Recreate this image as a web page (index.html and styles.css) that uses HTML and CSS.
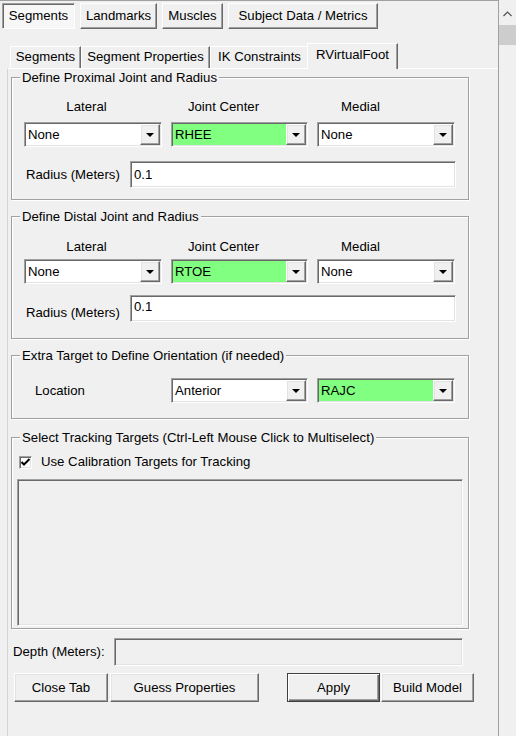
FILE: index.html
```html
<!DOCTYPE html>
<html>
<head>
<meta charset="utf-8">
<link rel="stylesheet" href="styles.css">
</head>
<body>
<div class="app">
  <div class="main">
    <div class="top-tabs">
      <div class="ttab active w-seg">Segments</div>
      <div class="ttab w-land">Landmarks</div>
      <div class="ttab w-mus">Muscles</div>
      <div class="ttab w-subj">Subject Data / Metrics</div>
    </div>
    <div class="inner-tabs">
      <div class="itab w-iseg">Segments</div>
      <div class="itab w-iprop">Segment Properties</div>
      <div class="itab w-iik">IK Constraints</div>
      <div class="itab active w-ifoot">RVirtualFoot</div>
    </div>
    <div class="panel">
      <div class="group g1">
        <span class="group-title">Define Proximal Joint and Radius</span>
        <div class="col-labels"><span>Lateral</span><span>Joint Center</span><span>Medial</span></div>
        <div class="combo-row">
          <div class="combo"><span class="combo-text">None</span><span class="drop"><i class="tri"></i></span></div>
          <div class="combo green"><span class="combo-text">RHEE</span><span class="drop"><i class="tri"></i></span></div>
          <div class="combo"><span class="combo-text">None</span><span class="drop"><i class="tri"></i></span></div>
        </div>
        <div class="radius-row">
          <span class="radius-label">Radius (Meters)</span>
          <div class="field">0.1</div>
        </div>
      </div>

      <div class="group g2">
        <span class="group-title">Define Distal Joint and Radius</span>
        <div class="col-labels"><span>Lateral</span><span>Joint Center</span><span>Medial</span></div>
        <div class="combo-row">
          <div class="combo"><span class="combo-text">None</span><span class="drop"><i class="tri"></i></span></div>
          <div class="combo green"><span class="combo-text">RTOE</span><span class="drop"><i class="tri"></i></span></div>
          <div class="combo"><span class="combo-text">None</span><span class="drop"><i class="tri"></i></span></div>
        </div>
        <div class="radius-row">
          <span class="radius-label">Radius (Meters)</span>
          <div class="field">0.1</div>
        </div>
      </div>

      <div class="group g3">
        <span class="group-title">Extra Target to Define Orientation (if needed)</span>
        <div class="combo-row">
          <span class="loc-label">Location</span>
          <div class="combo"><span class="combo-text">Anterior</span><span class="drop"><i class="tri"></i></span></div>
          <div class="combo green"><span class="combo-text">RAJC</span><span class="drop"><i class="tri"></i></span></div>
        </div>
      </div>

      <div class="group g4">
        <span class="group-title">Select Tracking Targets (Ctrl-Left Mouse Click to Multiselect)</span>
        <div class="check-row">
          <span class="checkbox"><svg width="11" height="11" viewBox="0 0 11 11"><polyline points="1.5,5 4,7.5 9.5,2" fill="none" stroke="#000" stroke-width="2"/></svg></span>
          <span class="check-label">Use Calibration Targets for Tracking</span>
        </div>
        <div class="listbox"></div>
      </div>

      <div class="depth-row">
        <span class="depth-label">Depth (Meters):</span>
        <div class="field disabled"></div>
      </div>

      <div class="button-row">
        <div class="btn w-close">Close Tab</div>
        <div class="btn w-guess">Guess Properties</div>
        <div class="btn default w-apply">Apply</div>
        <div class="btn w-build">Build Model</div>
      </div>
    </div>
  </div>
  <div class="vscroll">
    <div class="sb-up"><svg width="9" height="6" viewBox="0 0 9 6"><polyline points="0.5,5 4.5,1 8.5,5" fill="none" stroke="#505050" stroke-width="1.2"/></svg></div>
    <div class="sb-thumb"></div>
  </div>
</div>
</body>
</html>
```
FILE: styles.css
```css
* { box-sizing: border-box; }
html, body { margin: 0; padding: 0; }
body {
  width: 516px;
  height: 736px;
  overflow: hidden;
  background: #f0f0f0;
  font-family: "Liberation Sans", Arial, sans-serif;
  font-size: 13.2px;
  line-height: 16px;
  color: #000;
}
.app { display: flex; height: 736px; }
.main {
  width: 498px;
  border-top: 1px solid #a0a0a0;
  overflow: hidden;
  display: flex;
  flex-direction: column;
}

/* outer button-style tabs */
.top-tabs { display: flex; gap: 5px; padding: 2px 0 0 2px; }
.ttab {
  height: 26px;
  display: flex;
  align-items: center;
  justify-content: center;
  border: 1px solid;
  border-color: #fff #696969 #696969 #fff;
  box-shadow: inset -1px -1px 0 #a0a0a0;
}
.ttab.active {
  border-color: #a0a0a0 #fff #fff #a0a0a0;
  box-shadow: inset 1px 1px 0 #696969;
  background: #f7f7f7;
}
.w-seg { width: 73px; }
.w-land { width: 77px; }
.w-mus { width: 61px; }
.w-subj { width: 150px; }

/* inner tabs */
.inner-tabs {
  display: flex;
  align-items: flex-end;
  height: 25px;
  margin-top: 14px;
  padding-left: 10px;
  position: relative;
  z-index: 1;
}
.itab {
  height: 22px;
  padding-bottom: 1px;
  display: flex;
  align-items: center;
  justify-content: center;
  border: 1px solid;
  border-bottom: 0;
  border-color: #fff #696969 transparent #fff;
  box-shadow: inset -1px 0 0 #a0a0a0;
}
.itab.active {
  height: 26px;
  margin: 0 -2px -1px;
  padding-bottom: 4px;
  background: #f0f0f0;
}
.w-iseg { width: 71px; }
.w-iprop { width: 129px; }
.w-iik { width: 99px; }
.w-ifoot { width: 91px; }

.panel {
  flex: 1;
  margin-left: 7px;
  border-top: 1px solid #fff;
  border-left: 1px solid #d5d5d5;
  padding: 8px 0 0 3px;
}

/* group boxes */
.group {
  width: 458px;
  border: 1px solid #a0a0a0;
  box-shadow: inset 1px 1px 0 #fff, 1px 1px 0 #fff;
  position: relative;
}
.group-title {
  position: absolute;
  top: -8px;
  left: 8px;
  padding: 0 2px;
  background: #f0f0f0;
  white-space: nowrap;
}
.g1 { padding: 21px 0 11px 12px; }
.g2 { padding: 22px 0 16px 12px; margin-top: 16px; }
.g3 { padding: 22px 0 15px 12px; margin-top: 16px; }
.g4 { padding: 16px 0 2px 0; margin-top: 18px; }

.col-labels {
  display: grid;
  grid-template-columns: 125px 149px 125px;
  text-align: center;
  height: 16px;
}
.combo-row {
  display: grid;
  grid-template-columns: 138px 137px 138px;
  column-gap: 9px;
}
.g1 .combo-row { margin-top: 7px; }
.g2 .combo-row { margin-top: 4px; }
.loc-label { padding-left: 11px; align-self: center; }

.combo {
  height: 25px;
  border: 1px solid;
  border-color: #a0a0a0 #fff #fff #a0a0a0;
  box-shadow: inset 1px 1px 0 #696969, inset -1px -1px 0 #e3e3e3;
  padding: 1px;
  background: #fff;
  display: flex;
}
.combo.green { background: #80ff80; }
.combo-text {
  flex: 1;
  padding-left: 2px;
  display: flex;
  align-items: center;
}
.drop {
  width: 20px;
  border: 1px solid;
  border-color: #fff #696969 #696969 #fff;
  box-shadow: inset -1px -1px 0 #a0a0a0, inset 1px 1px 0 #e3e3e3;
  background: #f0f0f0;
  display: flex;
  align-items: center;
  justify-content: center;
}
.tri {
  width: 0;
  height: 0;
  border-left: 4px solid transparent;
  border-right: 4px solid transparent;
  border-top: 4px solid #000;
  margin-top: 1px;
}

.radius-row {
  display: grid;
  grid-template-columns: 106px 326px;
}
.g1 .radius-row { margin-top: 14px; align-items: center; }
.g2 .radius-row { margin-top: 11px; align-items: start; }
.radius-label { padding-left: 2px; }
.g2 .radius-label { padding-top: 10px; }

.field {
  height: 27px;
  border: 1px solid;
  border-color: #a0a0a0 #fff #fff #a0a0a0;
  box-shadow: inset 1px 1px 0 #696969, inset -1px -1px 0 #e3e3e3;
  background: #fff;
  padding: 0 3px;
  display: flex;
  align-items: center;
}
.g2 .field { align-items: flex-start; padding-top: 3px; }
.field.disabled { background: #f0f0f0; height: 28px; }

.check-row {
  display: flex;
  align-items: center;
  height: 16px;
  margin-left: 7px;
}
.checkbox {
  width: 13px;
  height: 13px;
  border: 1px solid;
  border-color: #a0a0a0 #fff #fff #a0a0a0;
  box-shadow: inset 1px 1px 0 #696969, inset -1px -1px 0 #e3e3e3;
  background: #fff;
  display: flex;
  align-items: center;
  justify-content: center;
}
.checkbox svg { display: block; }
.check-label { margin-left: 9px; }

.listbox {
  margin: 9px 0 0 5px;
  width: 446px;
  height: 147px;
  border: 1px solid;
  border-color: #a0a0a0 #fff #fff #a0a0a0;
  box-shadow: inset 1px 1px 0 #696969, inset -1px -1px 0 #e3e3e3;
  background: #f0f0f0;
}

.depth-row {
  display: grid;
  grid-template-columns: 103px 349px;
  align-items: center;
  margin-top: 9px;
}
.depth-label { padding-left: 2px; }

.button-row {
  display: flex;
  margin-top: 7px;
  padding-left: 3px;
}
.btn {
  height: 29px;
  border: 1px solid;
  border-color: #fff #696969 #696969 #fff;
  box-shadow: inset -1px -1px 0 #a0a0a0, inset 1px 1px 0 #e3e3e3;
  background: #f0f0f0;
  display: flex;
  align-items: center;
  justify-content: center;
}
.btn.default {
  border: 1px solid #404040;
  box-shadow: inset 1px 1px 0 #fff, inset -1px -1px 0 #696969, inset -2px -2px 0 #a0a0a0;
}
.w-close { width: 94px; }
.w-guess { width: 149px; margin-left: 2px; }
.w-apply { width: 93px; margin-left: 28px; }
.w-build { width: 93px; margin-left: 1px; }

/* scrollbar */
.vscroll {
  width: 18px;
  border-left: 1px solid #a0a0a0;
  display: flex;
  flex-direction: column;
}
.sb-up {
  height: 25px;
  display: flex;
  justify-content: center;
  padding-top: 11px;
}
.sb-up svg { display: block; }
.sb-thumb { height: 20px; background: #cdcdcd; }
```
